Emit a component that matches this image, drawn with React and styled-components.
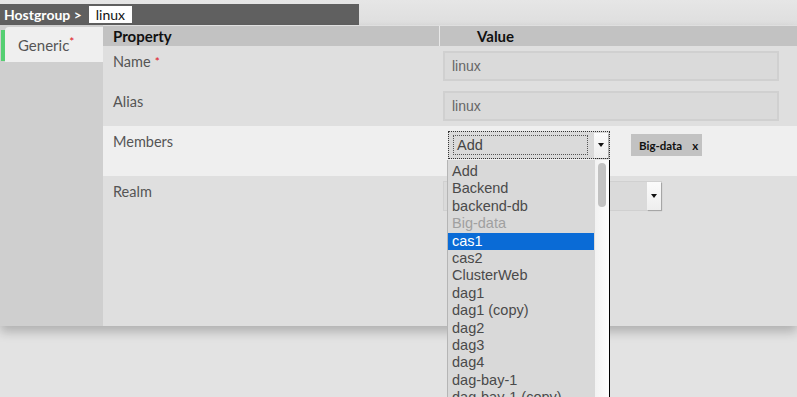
import React from 'react';
import styled, { createGlobalStyle } from 'styled-components';

const members = [
  'Add', 'Backend', 'backend-db', 'Big-data', 'cas1', 'cas2', 'ClusterWeb',
  'dag1', 'dag1 (copy)', 'dag2', 'dag3', 'dag4', 'dag-bay-1', 'dag-bay-1 (copy)',
];

const GlobalStyle = createGlobalStyle`
  html, body {
    margin: 0;
    padding: 0;
    overflow: hidden;
    background: #e3e3e3;
    font-family: Lato, "Open Sans", sans-serif;
  }
`;

const App = () => (
  <>
    <GlobalStyle />
    <Page>
      <TopBar>
        <Crumb>
          Hostgroup &gt;
          <NameBox>linux</NameBox>
        </Crumb>
      </TopBar>
      <Panel>
        <Sidebar>
          <Tab active>
            Generic
            <Star>*</Star>
          </Tab>
        </Sidebar>
        <Main>
          <HeadRow>
            <HeadCell>Property</HeadCell>
            <HeadCell value>Value</HeadCell>
          </HeadRow>
          <Row>
            <Label>
              Name
              <Star spaced>*</Star>
            </Label>
            <ValueCell>
              <Input>linux</Input>
            </ValueCell>
          </Row>
          <Row>
            <Label>Alias</Label>
            <ValueCell>
              <Input>linux</Input>
            </ValueCell>
          </Row>
          <Row highlight height={50}>
            <Label>Members</Label>
            <ValueCell>
              <MemberLine>
                <SelectWrap>
                  <FocusSelect>
                    <SelectText>Add</SelectText>
                    <ArrowBtn><Caret /></ArrowBtn>
                  </FocusSelect>
                  <DropList>
                    {members.map((m) => (
                      <Option
                        key={m}
                        selected={m === 'cas1'}
                        disabled={m === 'Big-data'}
                      >
                        {m}
                      </Option>
                    ))}
                    <Scrollbar>
                      <Thumb />
                    </Scrollbar>
                  </DropList>
                </SelectWrap>
                <TagChip>
                  Big-data
                  <TagClose>x</TagClose>
                </TagChip>
              </MemberLine>
            </ValueCell>
          </Row>
          <Row height={150}>
            <Label>Realm</Label>
            <ValueCell>
              <RealmSelect>
                <ArrowBtn tall><Caret /></ArrowBtn>
              </RealmSelect>
            </ValueCell>
          </Row>
        </Main>
      </Panel>
    </Page>
  </>
);

export default App;

const Page = styled.div`
  width: 797px;
  height: 397px;
`;

const TopBar = styled.div`
  height: 25px;
  padding-top: 4px;
  box-sizing: border-box;
  background: linear-gradient(#e6e6e6, #dedede);
`;

const Crumb = styled.div`
  width: 359px;
  height: 21px;
  background: #606060;
  display: flex;
  align-items: center;
  padding-left: 4px;
  box-sizing: border-box;
  color: #fff;
  font-weight: 700;
  font-size: 14px;
`;

const NameBox = styled.span`
  margin-left: 7px;
  height: 17px;
  padding: 0 7px;
  background: #fff;
  color: #111;
  font-weight: 400;
  font-size: 14px;
  line-height: 17px;
`;

const Panel = styled.div`
  display: flex;
  height: 301px;
  box-shadow: 0 6px 10px rgba(0, 0, 0, 0.22);
  position: relative;
`;

const Sidebar = styled.div`
  width: 103px;
  background: #cfcfcf;
  padding-top: 2px;
`;

const Tab = styled.div`
  height: 35px;
  margin-left: 5px;
  padding-left: 13px;
  background: ${(p) => (p.active ? '#efefef' : 'transparent')};
  border-top-left-radius: 4px;
  color: #555;
  font-size: 15px;
  display: flex;
  align-items: center;
  position: relative;
  &::before {
    content: '';
    position: absolute;
    left: -4px;
    top: 3px;
    bottom: 1px;
    width: 4px;
    background: #55cf72;
  }
`;

const Star = styled.span`
  color: #e0101a;
  font-size: 12px;
  align-self: flex-start;
  margin-top: ${(p) => (p.spaced ? '0' : '7px')};
  margin-left: ${(p) => (p.spaced ? '4px' : '0')};
`;

const Main = styled.div`
  flex: 1;
  background: #dfdfdf;
`;

const HeadRow = styled.div`
  display: grid;
  grid-template-columns: 336px 1fr;
  height: 20px;
  margin-top: 1px;
  background: #c2c2c2;
`;

const HeadCell = styled.div`
  font-weight: 700;
  font-size: 15px;
  color: #111;
  line-height: 20px;
  padding-left: ${(p) => (p.value ? '37px' : '10px')};
  border-left: ${(p) => (p.value ? '1px solid #e8e8e8' : 'none')};
`;

const Row = styled.div`
  display: grid;
  grid-template-columns: 336px 1fr;
  height: ${(p) => p.height || 40}px;
  background: ${(p) => (p.highlight ? '#efefef' : '#dfdfdf')};
`;

const Label = styled.div`
  padding: 7px 10px 0;
  color: #555;
  font-size: 14.5px;
  display: flex;
  align-items: flex-start;
  line-height: 18px;
`;

const ValueCell = styled.div`
  padding: 5px 18px 0 4px;
`;

const Input = styled.div`
  height: 30px;
  box-sizing: border-box;
  border: 2px solid #d0d0d0;
  background: #dadada;
  padding-left: 7px;
  line-height: 26px;
  color: #666;
  font-family: "Liberation Sans", Arial, sans-serif;
  font-size: 14px;
`;

const MemberLine = styled.div`
  display: flex;
  align-items: flex-start;
  padding-left: 5px;
`;

const SelectWrap = styled.div`
  position: relative;
  width: 162px;
`;

const FocusSelect = styled.div`
  height: 28px;
  box-sizing: border-box;
  border: 1px dotted #333;
  background: #dadada;
  display: flex;
  align-items: center;
  padding: 0 1px 0 4px;
`;

const SelectText = styled.div`
  flex: 1;
  height: 20px;
  box-sizing: border-box;
  border: 1px dotted #555;
  padding-left: 3px;
  line-height: 19px;
  color: #444;
  font-family: "Liberation Sans", Arial, sans-serif;
  font-size: 14.5px;
  margin-right: 6px;
`;

const ArrowBtn = styled.div`
  width: 14px;
  height: ${(p) => (p.tall ? '28px' : '25px')};
  background: linear-gradient(#fbfbfb, #eeeeee);
  box-shadow: 1px 1px 1px rgba(0, 0, 0, 0.2);
  display: flex;
  align-items: center;
  justify-content: center;
`;

const Caret = styled.span`
  width: 0;
  height: 0;
  border-left: 3px solid transparent;
  border-right: 3px solid transparent;
  border-top: 4px solid #111;
`;

const DropList = styled.div`
  position: absolute;
  top: 29px;
  left: -1px;
  width: 163px;
  height: 240px;
  box-sizing: border-box;
  border-left: 1px solid #b5b5b5;
  border-right: 1px solid #000;
  background: #d9d9d9;
  padding: 3px 15px 0 0;
  z-index: 5;
  overflow: hidden;
`;

const Option = styled.div`
  height: 17.4px;
  line-height: 17px;
  padding-left: 4px;
  font-family: "Liberation Sans", Arial, sans-serif;
  font-size: 14.5px;
  white-space: nowrap;
  color: ${(p) => (p.selected ? '#fff' : p.disabled ? '#a0a0a0' : '#4a4a4a')};
  background: ${(p) => (p.selected ? '#0a6bd6' : 'transparent')};
`;

const Scrollbar = styled.div`
  position: absolute;
  top: 0;
  right: 0;
  bottom: 0;
  width: 14px;
  background: linear-gradient(90deg, #f2f2f2, #fdfdfd);
`;

const Thumb = styled.div`
  position: absolute;
  top: 3px;
  left: 3px;
  width: 8px;
  height: 44px;
  border-radius: 4px;
  background: #c2c2c2;
`;

const TagChip = styled.div`
  margin: 3px 0 0 21px;
  height: 22px;
  padding: 0 4px 0 8px;
  background: #c2c2c2;
  display: flex;
  align-items: center;
  font-weight: 700;
  font-size: 11.5px;
  color: #111;
`;

const TagClose = styled.span`
  margin-left: 10px;
`;

const RealmSelect = styled.div`
  width: 219px;
  height: 30px;
  box-sizing: border-box;
  border: 1px solid #d0d0d0;
  background: #dadada;
  display: flex;
  justify-content: flex-end;
  align-items: flex-start;
`;
